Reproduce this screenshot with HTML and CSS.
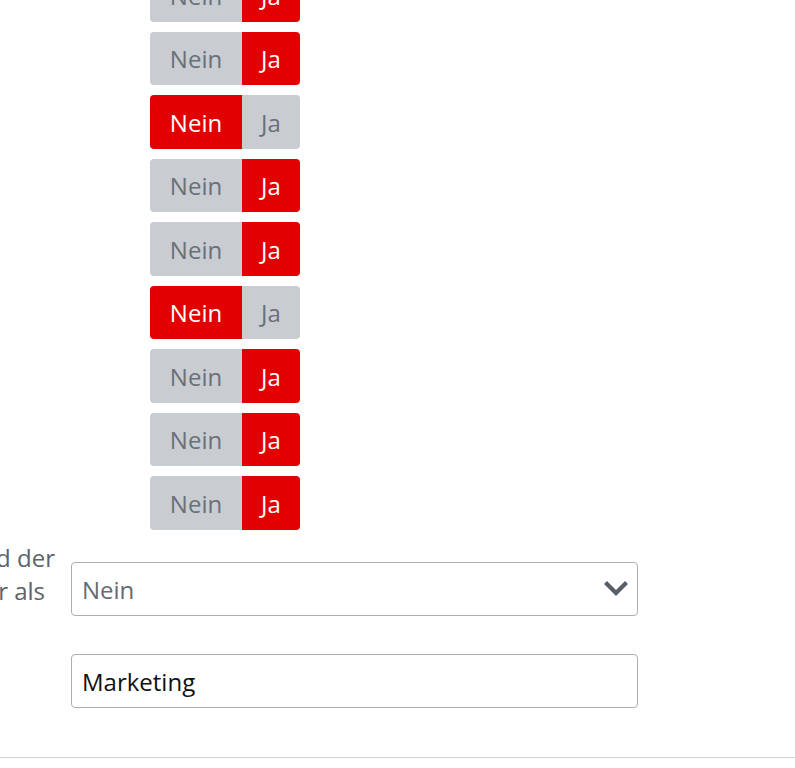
FILE: index.html
```html
<!DOCTYPE html>
<html lang="de">
<head>
<meta charset="utf-8">
<link rel="stylesheet" href="styles.css">
</head>
<body>
<div class="page">
  <div class="toggles">
    <div class="toggle"><span class="opt">Nein</span><span class="opt on ja">Ja</span></div>
    <div class="toggle"><span class="opt">Nein</span><span class="opt on ja">Ja</span></div>
    <div class="toggle"><span class="opt on">Nein</span><span class="opt ja">Ja</span></div>
    <div class="toggle"><span class="opt">Nein</span><span class="opt on ja">Ja</span></div>
    <div class="toggle"><span class="opt">Nein</span><span class="opt on ja">Ja</span></div>
    <div class="toggle"><span class="opt on">Nein</span><span class="opt ja">Ja</span></div>
    <div class="toggle"><span class="opt">Nein</span><span class="opt on ja">Ja</span></div>
    <div class="toggle"><span class="opt">Nein</span><span class="opt on ja">Ja</span></div>
    <div class="toggle"><span class="opt">Nein</span><span class="opt on ja">Ja</span></div>
  </div>

  <div class="row">
    <div class="label"><span class="label-text"><span class="line">Anzeige des Namens und der</span><span class="line line2">Ansprechpartner als</span></span></div>
    <div class="select">
      <span class="select-value">Nein</span>
      <svg class="chev" width="24" height="16" viewBox="0 0 24 16"><path d="M3 3 L12 12 L21 3" fill="none" stroke="#555d66" stroke-width="4.2" stroke-linecap="square"/></svg>
    </div>
  </div>

  <div class="row row2">
    <div class="label"></div>
    <div class="input">Marketing</div>
  </div>

  <div class="rule"></div>
</div>
</body>
</html>
```

FILE: styles.css
```css
html, body {
  margin: 0;
  padding: 0;
  background: #fff;
  overflow: hidden;
}
body {
  font-family: "Open Sans", "Noto Sans", sans-serif;
  font-size: 24px;
}
.page {
  width: 795px;
  height: 768px;
  overflow: hidden;
}
.toggles {
  display: flex;
  flex-direction: column;
  gap: 10px;
  padding-left: 150px;
  margin-top: -32px;
}
.toggle {
  display: flex;
  width: 150px;
  height: 53.5px;
  border-radius: 4px;
  overflow: hidden;
}
.opt {
  display: flex;
  align-items: center;
  justify-content: center;
  width: 92px;
  padding-top: 2px;
  background: #c9ccd1;
  color: #6a7078;
  line-height: 1;
}
.opt.ja {
  width: 58px;
}
.opt.on {
  background: #e30000;
  color: #fff;
}
.row {
  display: flex;
  align-items: flex-start;
  margin-top: 32px;
}
.label {
  width: 55px;
  flex: none;
  display: flex;
  justify-content: flex-end;
  margin-right: 16px;
  margin-top: -21px;
}
.label-text {
  display: flex;
  flex-direction: column;
  align-items: flex-end;
  white-space: nowrap;
  line-height: 33px;
  color: #5c636b;
  flex: none;
}
.line2 {
  padding-right: 10px;
}
.select, .input {
  box-sizing: border-box;
  width: 567px;
  height: 54px;
  border: 1px solid #aeaeae;
  border-radius: 4px;
  display: flex;
  align-items: center;
  padding: 2px 10px 0;
}
.select {
  justify-content: space-between;
}
.select-value {
  color: #656b72;
}
.chev {
  margin-right: -1px;
  margin-top: -1px;
}
.input {
  color: #111;
}
.row2 {
  margin-top: 38px;
}
.rule {
  margin-top: 49px;
  height: 1px;
  background: #cfcfcf;
}
```
